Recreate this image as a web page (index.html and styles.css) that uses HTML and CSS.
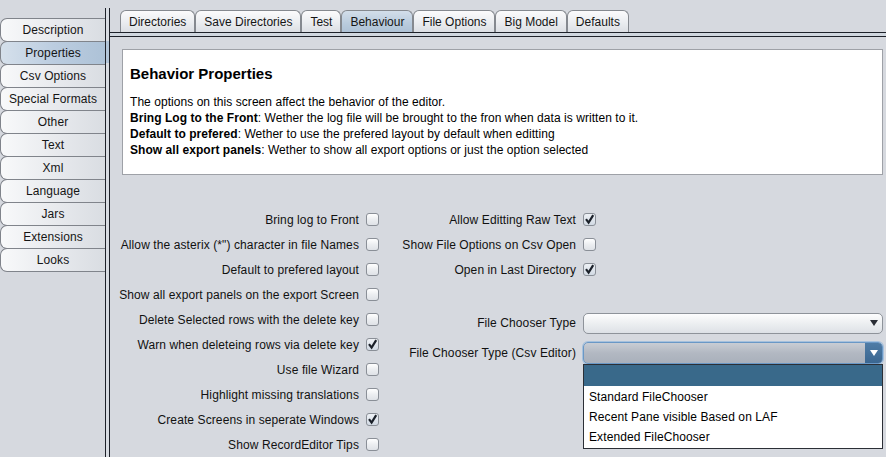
FILE: index.html
```html
<!DOCTYPE html>
<html>
<head>
<meta charset="utf-8">
<link rel="stylesheet" href="styles.css">
</head>
<body>
<div class="app">
  <nav class="side">
    <div class="vtab">Description</div>
    <div class="vtab sel">Properties</div>
    <div class="vtab">Csv Options</div>
    <div class="vtab">Special Formats</div>
    <div class="vtab">Other</div>
    <div class="vtab">Text</div>
    <div class="vtab">Xml</div>
    <div class="vtab">Language</div>
    <div class="vtab">Jars</div>
    <div class="vtab">Extensions</div>
    <div class="vtab">Looks</div>
  </nav>
  <div class="vsep"></div>
  <main class="main">
    <div class="tabbar">
      <div class="htab">Directories</div>
      <div class="htab">Save Directories</div>
      <div class="htab">Test</div>
      <div class="htab sel">Behaviour</div>
      <div class="htab">File Options</div>
      <div class="htab">Big Model</div>
      <div class="htab">Defaults</div>
    </div>
    <div class="hsep"></div>
    <section class="infobox">
      <h3 class="title">Behavior Properties</h3>
      <p class="desc">The options on this screen affect the behavior of the editor.<br>
      <b>Bring Log to the Front</b>: Wether the log file will be brought to the fron when data is written to it.<br>
      <b>Default to prefered</b>: Wether to use the prefered layout by default when editting<br>
      <b>Show all export panels</b>: Wether to show all export options or just the option selected</p>
    </section>
    <div class="form">
      <div class="col-left">
        <div class="row"><span>Bring log to Front</span><span class="cb"></span></div>
        <div class="row"><span>Allow the asterix (*") character in file Names</span><span class="cb"></span></div>
        <div class="row"><span>Default to prefered layout</span><span class="cb"></span></div>
        <div class="row"><span>Show all export panels on the export Screen</span><span class="cb"></span></div>
        <div class="row"><span>Delete Selected rows with the delete key</span><span class="cb"></span></div>
        <div class="row"><span>Warn when deleteing rows via delete key</span><span class="cb on"><svg viewBox="0 0 13 13" width="13" height="13"><path d="M3 6.2 L5.6 9.6 L10.2 2.2" fill="none" stroke="#1b2029" stroke-width="2.2"/></svg></span></div>
        <div class="row"><span>Use file Wizard</span><span class="cb"></span></div>
        <div class="row"><span>Highlight missing translations</span><span class="cb"></span></div>
        <div class="row"><span>Create Screens in seperate Windows</span><span class="cb on"><svg viewBox="0 0 13 13" width="13" height="13"><path d="M3 6.2 L5.6 9.6 L10.2 2.2" fill="none" stroke="#1b2029" stroke-width="2.2"/></svg></span></div>
        <div class="row"><span>Show RecordEditor Tips</span><span class="cb"></span></div>
      </div>
      <div class="col-right">
        <div class="grid">
          <span class="lbl">Allow Editting Raw Text</span><span class="ctl"><span class="cb on"><svg viewBox="0 0 13 13" width="13" height="13"><path d="M3 6.2 L5.6 9.6 L10.2 2.2" fill="none" stroke="#1b2029" stroke-width="2.2"/></svg></span></span>
          <span class="lbl">Show File Options on Csv Open</span><span class="ctl"><span class="cb"></span></span>
          <span class="lbl">Open in Last Directory</span><span class="ctl"><span class="cb on"><svg viewBox="0 0 13 13" width="13" height="13"><path d="M3 6.2 L5.6 9.6 L10.2 2.2" fill="none" stroke="#1b2029" stroke-width="2.2"/></svg></span></span>
        </div>
        <div class="grid combos">
          <span class="lbl">File Chooser Type</span>
          <div class="combo"><span class="arrow"><svg viewBox="0 0 8 6" width="8" height="6"><path d="M0 0 H8 L4 6 Z" fill="#2a2e35"/></svg></span></div>
          <span class="lbl">File Chooser Type (Csv Editor)</span>
          <div class="combo focus">
            <span class="arrow"><svg viewBox="0 0 8 6" width="8" height="6"><path d="M0 0 H8 L4 6 Z" fill="#ffffff"/></svg></span>
            <ul class="popup">
              <li class="item cur">&nbsp;</li>
              <li class="item">Standard FileChooser</li>
              <li class="item">Recent Pane visible Based on LAF</li>
              <li class="item">Extended FileChooser</li>
            </ul>
          </div>
        </div>
      </div>
    </div>
  </main>
</div>
</body>
</html>
```
FILE: styles.css
```css
* { box-sizing: border-box; }
html, body { margin: 0; padding: 0; }
body {
  width: 886px;
  height: 457px;
  overflow: hidden;
  background: #d6d9df;
  font-family: "Liberation Sans", Arial, sans-serif;
  font-size: 12px;
  color: #111;
}
.app { display: flex; height: 457px; }

.side { width: 105px; padding-top: 18px; display: flex; flex-direction: column; }
.vtab {
  height: 24px;
  margin-top: -1px;
  border: 1px solid #80848b;
  border-right: none;
  border-radius: 7px 0 0 7px;
  background: linear-gradient(to right, #f8f9fa, #e7e9ed 55%, #d9dde2);
  line-height: 22px;
  text-align: center;
  color: #151515;
  letter-spacing: 0.1px;
}
.vtab:first-child { margin-top: 0; }
.vtab.sel { background: linear-gradient(to right, #d5e0eb, #bccde0 50%, #adc2d7); }

.vsep {
  width: 5px;
  margin-top: 8px;
  border-left: 1px solid #1e222a;
  border-right: 1px solid #1e222a;
  background: linear-gradient(to bottom, #d8dce2 33px, #b3c6d9 33px, #b3c6d9 55px, #d8dce2 55px);
}

.main { flex: 1; display: flex; flex-direction: column; }
.tabbar { height: 33px; padding-left: 10px; display: flex; align-items: flex-end; }
.htab {
  height: 22px;
  padding: 0 8px;
  border: 1px solid #85898f;
  border-bottom: none;
  border-radius: 6px 6px 0 0;
  background: linear-gradient(#fbfbfc, #eceef1 50%, #dcdfe4);
  line-height: 22px;
  color: #151515;
  white-space: nowrap;
}
.htab.sel { background: linear-gradient(#d3deea, #b9cbdd 60%, #aec2d6); }
.hsep {
  height: 5px;
  border-top: 1px solid #1e222a;
  border-bottom: 1px solid #1e222a;
  background: #d0d7df;
}

.infobox {
  margin: 12px 3px 0 12px;
  border: 1px solid #9ea1a7;
  background: #fff;
  padding: 15px 8px 16px 7px;
}
.title { margin: 0; font-size: 15px; line-height: 18px; font-weight: bold; color: #000; }
.desc { margin: 11px 0 0; font-size: 12px; line-height: 16px; color: #000; letter-spacing: 0.05px; }

.form { display: flex; margin-top: 32px; letter-spacing: 0.1px; }
.col-left { width: 270px; padding-right: 1px; display: flex; flex-direction: column; align-items: flex-end; }
.row { height: 25px; display: flex; align-items: center; gap: 7px; white-space: nowrap; }

.cb {
  width: 13px;
  height: 13px;
  border: 1px solid #8a8f97;
  border-radius: 3px;
  background: linear-gradient(#ffffff, #eceef1 50%, #dfe2e7);
  display: inline-flex;
  align-items: center;
  justify-content: center;
  flex: none;
}
.cb.on { background: linear-gradient(#eef1f5, #d2dae4); }
.cb svg { display: block; margin: -1px; }

.col-right { flex: 1; padding-right: 3px; }
.grid { display: grid; grid-template-columns: 196px 1fr; column-gap: 7px; grid-auto-rows: 25px; align-items: center; }
.lbl { text-align: right; white-space: nowrap; }
.ctl { display: flex; align-items: center; }
.grid.combos { margin-top: 30px; grid-auto-rows: 22px; row-gap: 8px; }

.combo {
  position: relative;
  height: 21px;
  border: 1px solid #8e939a;
  border-radius: 5px;
  background: linear-gradient(#fdfdfe, #eef0f2 45%, #dde1e6);
  display: flex;
  justify-content: flex-end;
}
.arrow { width: 17px; display: flex; align-items: center; justify-content: center; border-radius: 0 4px 4px 0; }
.combo.focus {
  height: 22px;
  border-color: #6a98c6;
  box-shadow: 0 0 0 1px #a6c1dd;
  background: linear-gradient(#c9cdd4, #b2b8c2 50%, #a9b0bb);
}
.combo.focus .arrow { background: linear-gradient(#4f7ca6, #3a6690); }

.popup {
  position: absolute;
  top: 21px;
  left: -1px;
  right: -1px;
  margin: 0;
  padding: 0 0 2px;
  list-style: none;
  background: #fff;
  border: 1px solid #2b2f36;
  z-index: 5;
}
.item { height: 20px; line-height: 22px; padding-left: 5px; color: #000; white-space: nowrap; letter-spacing: 0.1px; }
.item.cur { background: #39698a; height: 21px; }
```
